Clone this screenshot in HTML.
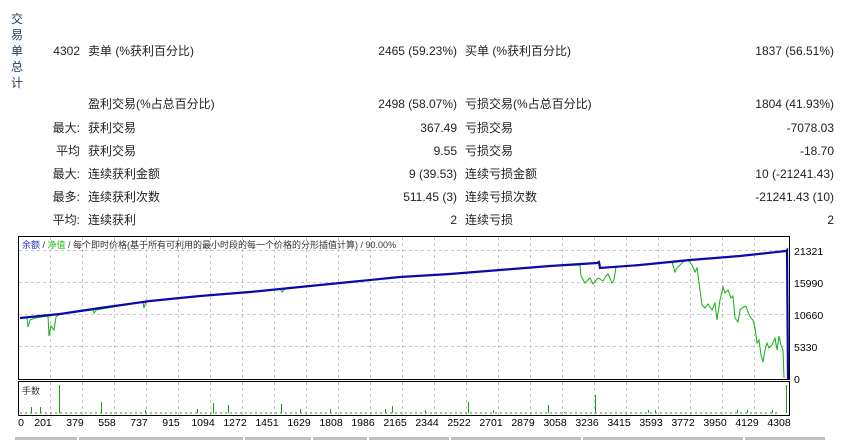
<!DOCTYPE html>
<html><head><meta charset="utf-8"><style>
body{margin:0;width:843px;height:440px;background:#fff;overflow:hidden;font-family:"Liberation Sans","Noto Sans CJK SC",sans-serif;font-size:12px;color:#222;position:relative}
.t{position:absolute;white-space:nowrap;line-height:14px}
.r{text-align:right}
.vl{position:absolute;left:11px;top:11px;width:14px;line-height:16px;font-size:12px;color:#1d3b55}
</style></head><body>
<div class="vl">交<br>易<br>单<br>总<br>计</div>

<div class="t r" style="right:763px;top:44px">4302</div>
<div class="t" style="left:88px;top:44px">卖单 (%获利百分比)</div>
<div class="t r" style="right:386px;top:44px">2465 (59.23%)</div>
<div class="t" style="left:465px;top:44px">买单 (%获利百分比)</div>
<div class="t r" style="right:9px;top:44px">1837 (56.51%)</div>

<div class="t" style="left:88px;top:97px">盈利交易(%占总百分比)</div>
<div class="t r" style="right:386px;top:97px">2498 (58.07%)</div>
<div class="t" style="left:465px;top:97px">亏损交易(%占总百分比)</div>
<div class="t r" style="right:9px;top:97px">1804 (41.93%)</div>

<div class="t r" style="right:763px;top:121px">最大:</div>
<div class="t" style="left:88px;top:121px">获利交易</div>
<div class="t r" style="right:386px;top:121px">367.49</div>
<div class="t" style="left:465px;top:121px">亏损交易</div>
<div class="t r" style="right:9px;top:121px">-7078.03</div>

<div class="t r" style="right:763px;top:144px">平均</div>
<div class="t" style="left:88px;top:144px">获利交易</div>
<div class="t r" style="right:386px;top:144px">9.55</div>
<div class="t" style="left:465px;top:144px">亏损交易</div>
<div class="t r" style="right:9px;top:144px">-18.70</div>

<div class="t r" style="right:763px;top:167px">最大:</div>
<div class="t" style="left:88px;top:167px">连续获利金额</div>
<div class="t r" style="right:386px;top:167px">9 (39.53)</div>
<div class="t" style="left:465px;top:167px">连续亏损金额</div>
<div class="t r" style="right:9px;top:167px">10 (-21241.43)</div>

<div class="t r" style="right:763px;top:190px">最多:</div>
<div class="t" style="left:88px;top:190px">连续获利次数</div>
<div class="t r" style="right:386px;top:190px">511.45 (3)</div>
<div class="t" style="left:465px;top:190px">连续亏损次数</div>
<div class="t r" style="right:9px;top:190px">-21241.43 (10)</div>

<div class="t r" style="right:763px;top:213px">平均:</div>
<div class="t" style="left:88px;top:213px">连续获利</div>
<div class="t r" style="right:386px;top:213px">2</div>
<div class="t" style="left:465px;top:213px">连续亏损</div>
<div class="t r" style="right:9px;top:213px">2</div>

<svg style="position:absolute;left:0;top:0" width="843" height="440" font-family="Liberation Sans, Noto Sans CJK SC, sans-serif">
<g stroke="#c8c8c8" stroke-dasharray="3,3" stroke-width="1">
<line x1="19" y1="250.5" x2="789" y2="250.5"/><line x1="19" y1="282.5" x2="789" y2="282.5"/><line x1="19" y1="314.5" x2="789" y2="314.5"/><line x1="19" y1="346.5" x2="789" y2="346.5"/>
<path d="M50.5 237V379M82.5 237V379M114.5 237V379M146.5 237V379M178.5 237V379M210.5 237V379M242.5 237V379M274.5 237V379M306.5 237V379M338.5 237V379M370.5 237V379M402.5 237V379M434.5 237V379M466.5 237V379M498.5 237V379M530.5 237V379M562.5 237V379M594.5 237V379M626.5 237V379M658.5 237V379M690.5 237V379M722.5 237V379M754.5 237V379"/>
<path d="M50.5 382V415M82.5 382V415M114.5 382V415M146.5 382V415M178.5 382V415M210.5 382V415M242.5 382V415M274.5 382V415M306.5 382V415M338.5 382V415M370.5 382V415M402.5 382V415M434.5 382V415M466.5 382V415M498.5 382V415M530.5 382V415M562.5 382V415M594.5 382V415M626.5 382V415M658.5 382V415M690.5 382V415M722.5 382V415M754.5 382V415"/>
</g>
<polyline fill="none" stroke="#10b010" stroke-width="1" points="20,318 27,318 28,327 30,320 35,318 48,316 49,336 51,326 54,330 56,317 60,314 93,310 94,313 96,310 143,302 144,308 146,301 200,296 280,289 282,292 285,289 300,287 350,282 400,277 440,275 450,274 500,270 550,266 580,265 581,276 585,283 590,278 593,284 598,278 603,281 606,276 608,274 612,283 614,280 616,267 640,265 672,262 675,272 677,268 685,260 688,260 692,265 695,272 697,268 700,290 702,305 705,308 708,304 712,310 715,303 717,320 720,300 723,287 725,293 728,290 731,298 733,296 735,318 738,322 740,310 742,308 746,306 748,312 751,318 753,320 755,328 757,343 759,340 761,355 763,362 765,350 767,343 769,348 772,345 775,338 777,350 779,336 781,345 783,350 784,378"/>
<polyline fill="none" stroke="#0a0aa8" stroke-width="2.2" points="20,318 60,314 100,308 150,301 200,296 250,292 300,287 350,282 400,277 450,274 500,270 550,266 597,263 599,262 600,268 640,265 690,260 740,256 786,251 787,250 788,379"/>
<rect x="18.5" y="236.5" width="771" height="143" fill="none" stroke="#000"/>
<rect x="18.5" y="381.5" width="771" height="34" fill="none" stroke="#000"/>
<text x="22" y="248" font-size="9"><tspan fill="#3030c0">余额</tspan><tspan fill="#333"> / </tspan><tspan fill="#20c020">净值</tspan><tspan fill="#333"> / 每个即时价格(基于所有可利用的最小时段的每一个价格的分形插值计算) / 90.00%</tspan></text>
<text x="22" y="394" font-size="9" fill="#333">手数</text>
<g stroke="#10a010" stroke-width="1">
<line x1="20" y1="413" x2="780" y2="413" stroke-dasharray="2,3"/>
<path d="M31.5 413V407M40.5 413V407M59.5 413V385M101.5 413V402M145.5 413V410M197.5 413V409M213.5 413V403M228.5 413V405M281.5 413V404M300.5 413V409M330.5 413V409M385.5 413V409M392.5 413V406M425.5 413V410M468.5 413V402M493.5 413V410M548.5 413V405M564.5 413V412M595.5 413V395M648.5 413V410M655.5 413V410M737.5 413V410M747.5 413V410M772.5 413V410M786.5 413V385"/>
</g>
<g font-size="10.5" fill="#000" text-anchor="middle">
<text x="21" y="426">0</text><text x="43" y="426">201</text><text x="75" y="426">379</text><text x="107" y="426">558</text><text x="139" y="426">737</text><text x="171" y="426">915</text><text x="203" y="426">1094</text><text x="235" y="426">1272</text><text x="267" y="426">1451</text><text x="299" y="426">1629</text><text x="331" y="426">1808</text><text x="363" y="426">1986</text><text x="395" y="426">2165</text><text x="427" y="426">2344</text><text x="459" y="426">2522</text><text x="491" y="426">2701</text><text x="523" y="426">2879</text><text x="555" y="426">3058</text><text x="587" y="426">3236</text><text x="619" y="426">3415</text><text x="651" y="426">3593</text><text x="683" y="426">3772</text><text x="715" y="426">3950</text><text x="747" y="426">4129</text><text x="779" y="426">4308</text>
</g>
<g font-size="10.5" fill="#000">
<text x="794" y="255">21321</text><text x="794" y="287">15990</text><text x="794" y="319">10660</text><text x="794" y="351">5330</text><text x="794" y="383">0</text>
</g>
<g fill="#c0c0c0">
<rect x="15" y="437" width="62" height="3"/><rect x="79" y="437" width="164" height="3"/><rect x="245" y="437" width="66" height="3"/><rect x="313" y="437" width="54" height="3"/><rect x="369" y="437" width="80" height="3"/><rect x="451" y="437" width="130" height="3"/><rect x="583" y="437" width="160" height="3"/><rect x="745" y="437" width="80" height="3"/>
</g>
</svg>
</body></html>
